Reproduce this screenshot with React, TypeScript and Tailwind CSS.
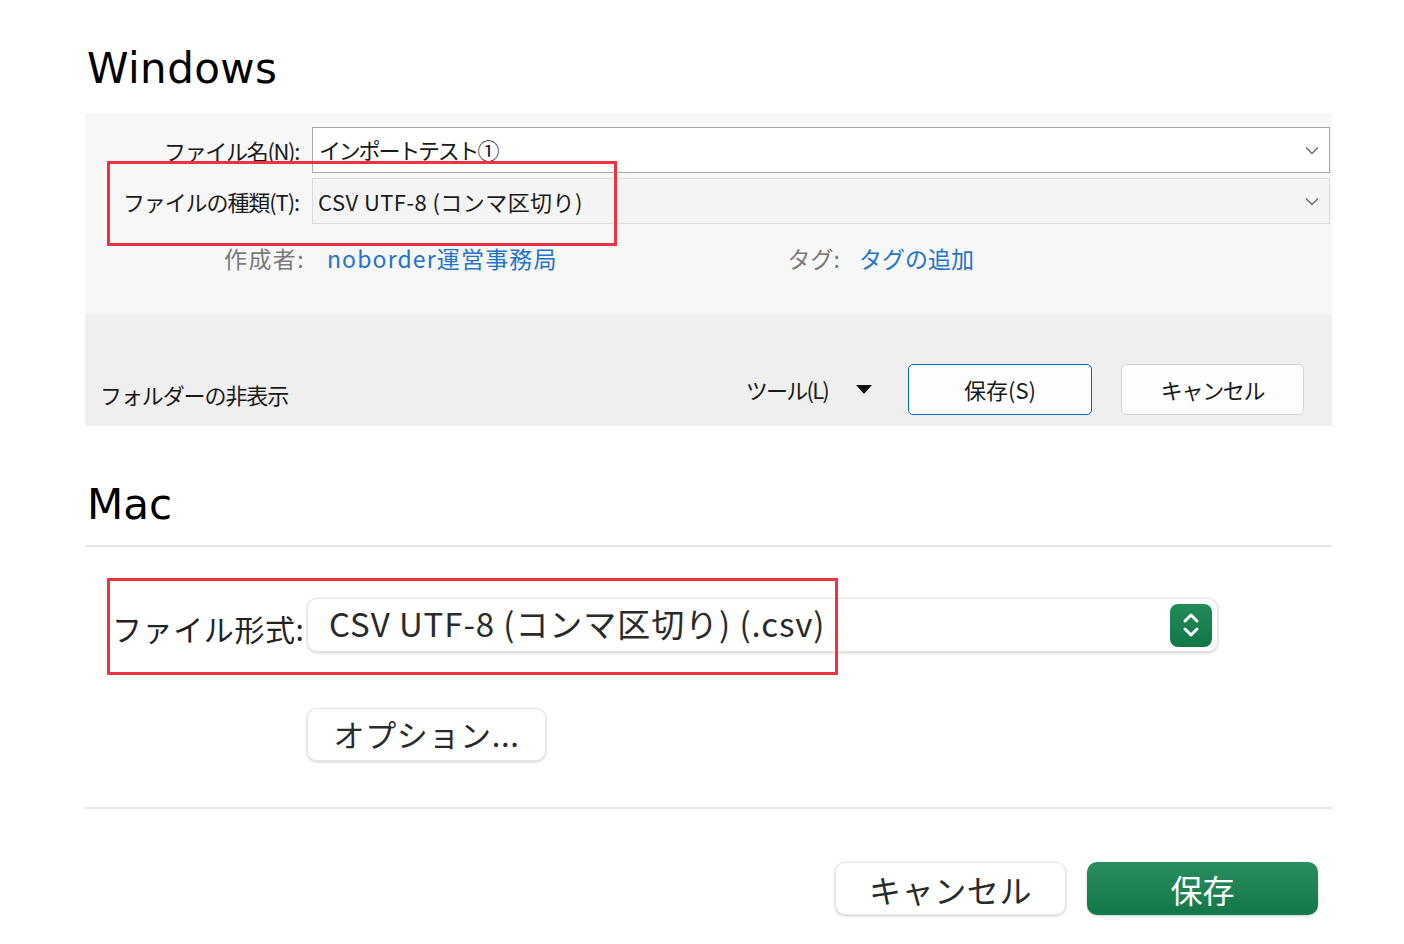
import React from 'react';

const jp = { fontFamily: '"Noto Sans CJK JP", "Noto Sans", sans-serif' };

function Chevron() {
  return (
    <svg className="w-[18px] h-[18px] text-[#6b6b6b]" viewBox="0 0 18 18" fill="none" stroke="currentColor" strokeWidth={1.4}>
      <path d="M3 6.5l6 6 6-6" />
    </svg>
  );
}

function WindowsDialog() {
  return (
    <div className="relative" style={jp}>
      {/* Top fields */}
      <div className="h-[201px] bg-[#f7f7f7] pt-[14px]">
        <div className="flex items-center h-[46px]">
          <div className="w-[227px] pr-[13px] text-right text-[22px] tracking-[-0.06em] text-[#1a1a1a]">ファイル名(N):</div>
          <div className="w-[1018px] h-[46px] bg-white border border-[#a9a9a9] flex items-center pl-[6px] pr-[8px]">
            <span className="flex-1 text-[22px] tracking-[-0.1em] text-[#1a1a1a] -mt-[2px]">インポートテスト①</span>
            <Chevron />
          </div>
        </div>
        <div className="flex items-center h-[46px] mt-[5px]">
          <div className="w-[227px] pr-[13px] text-right text-[22px] tracking-[-0.05em] text-[#1a1a1a]">ファイルの種類(T):</div>
          <div className="w-[1018px] h-[46px] bg-[#f4f4f4] border border-[#dadada] flex items-center pl-[5px] pr-[8px]">
            <span className="flex-1 text-[22px] tracking-[0.02em] text-[#1a1a1a]">CSV UTF-8 (コンマ区切り)</span>
            <Chevron />
          </div>
        </div>
        <div className="flex items-center h-[26px] mt-[21px] text-[23px]">
          <span className="ml-[139px] tracking-[0.06em] text-[#7a7a7a]">作成者:</span>
          <span className="ml-[22px] tracking-[0.05em] text-[#1f73c9]">noborder運営事務局</span>
          <span className="ml-[230px] text-[#7a7a7a]">タグ:</span>
          <span className="ml-[19px] text-[#1f73c9]">タグの追加</span>
        </div>
      </div>

      {/* Bottom bar */}
      <div className="h-[112px] bg-[#efefef] flex items-end pb-[11px]">
        <span className="ml-[15px] mb-[4px] text-[22px] tracking-[-0.05em] text-[#1a1a1a]">フォルダーの非表示</span>
        <div className="flex-1" />
        <div className="flex items-center h-[51px]">
          <span className="text-[22px] tracking-[-0.08em] text-[#1a1a1a]">ツール(L)</span>
          <svg className="ml-[28px] w-[16px] h-[10px]" viewBox="0 0 16 10">
            <path d="M0 0h16L8 9z" fill="#111" />
          </svg>
          <button className="ml-[36px] w-[184px] h-[51px] rounded-[5px] border border-[#0067c0] bg-[#fdfdfd] text-[22px] text-[#1a1a1a]">保存(S)</button>
          <button className="ml-[29px] mr-[28px] w-[183px] h-[51px] rounded-[5px] border border-[#d3d3d3] bg-[#fdfdfd] text-[22px] tracking-[-0.06em] text-[#1a1a1a]">キャンセル</button>
        </div>
      </div>

      <div className="absolute left-[22px] top-[48px] w-[510px] h-[85px] border-[3px] border-[#f0313f]" />
    </div>
  );
}

function MacDialog() {
  return (
    <div className="relative" style={jp}>
      <h2
        className="h-[119px] pt-[58px] pl-[2px] text-[42px] leading-[42px] text-black"
        style={{ fontFamily: '"DejaVu Sans", sans-serif' }}
      >
        Mac
      </h2>
      <div className="h-[2px] bg-[#e6e6e6]" />

      <div className="flex items-center mt-[51px]">
        <span className="ml-[27px] w-[195px] text-[30px] text-[#222] tracking-[0.02em] mt-[6px]">ファイル形式:</span>
        <div className="w-[911px] h-[54px] rounded-[10px] bg-white border border-[#e4e4e4] shadow-[0_1px_3px_rgba(0,0,0,0.18)] flex items-center pl-[21px] pr-[5px]">
          <span className="flex-1 text-[33px] text-[#2a2a2a] tracking-[0.028em] -mt-[2px]">CSV UTF-8 (コンマ区切り) (.csv)</span>
          <div className="w-[42px] h-[43px] rounded-[8px] bg-gradient-to-b from-[#228b5b] to-[#117747] flex items-center justify-center">
            <svg className="w-[22px] h-[30px]" viewBox="0 0 22 30" fill="none" stroke="white" strokeWidth={3} strokeLinecap="round" strokeLinejoin="round">
              <path d="M5 11l6-6 6 6" />
              <path d="M5 19l6 6 6-6" />
            </svg>
          </div>
        </div>
      </div>

      <button className="ml-[222px] mt-[56px] w-[239px] h-[53px] rounded-[10px] bg-white border border-[#e6e6e6] shadow-[0_1px_3px_rgba(0,0,0,0.2)] text-[31px] tracking-[0.02em] text-[#2a2a2a]">
        オプション...
      </button>

      <div className="h-[2px] bg-[#e6e6e6] mt-[46px]" />

      <div className="flex mt-[53px]">
        <button className="ml-[750px] w-[231px] h-[53px] rounded-[10px] bg-white border border-[#e6e6e6] shadow-[0_1px_3px_rgba(0,0,0,0.2)] text-[32px] text-[#2a2a2a] tracking-[0.02em]">
          キャンセル
        </button>
        <button className="ml-[21px] w-[231px] h-[53px] rounded-[10px] bg-gradient-to-b from-[#2a8d60] to-[#107848] shadow-[0_1px_3px_rgba(0,0,0,0.2)] text-[32px] text-white">
          保存
        </button>
      </div>

      <div className="absolute left-[22px] top-[152px] w-[731px] h-[97px] border-[3px] border-[#f0313f]" />
    </div>
  );
}

export default function App() {
  return (
    <div className="w-[1404px] h-[944px] bg-white overflow-hidden">
      <div className="ml-[85px] w-[1247px]">
        <h1
          className="h-[113px] pt-[48px] pl-[2px] text-[42px] leading-[42px] tracking-[0.01em] text-black"
          style={{ fontFamily: '"DejaVu Sans", sans-serif' }}
        >
          Windows
        </h1>
        <WindowsDialog />
        <MacDialog />
      </div>
    </div>
  );
}
